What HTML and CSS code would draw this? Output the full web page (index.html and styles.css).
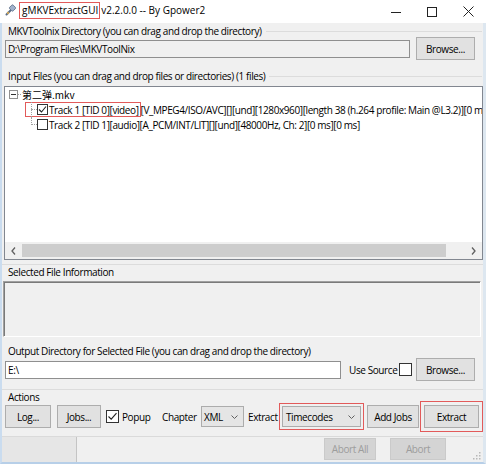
FILE: index.html
```html
<!DOCTYPE html>
<html>
<head>
<meta charset="utf-8">
<title>gMKVExtractGUI</title>
<link rel="stylesheet" href="styles.css">
</head>
<body>
<div class="window">
  <div class="titlebar">
    <svg class="app-icon" viewBox="0 0 12 12" width="12" height="12">
      <path d="M1.5 10.5 L5.5 6.5" stroke="#5b6e88" stroke-width="2" stroke-linecap="round"/>
      <rect x="5" y="1.5" width="5" height="5" rx="1" fill="#9fb2cc" stroke="#5b6e88" stroke-width="0.8" transform="rotate(45 7.5 4)"/>
      <circle cx="3" cy="9" r="1.2" fill="#c8a25a"/>
    </svg>
    <span class="title"><span class="title-hl">gMKVExtractGUI</span><span class="title-rest">v2.2.0.0 -- By Gpower2</span></span>
    <div class="controls">
      <span class="ctl"><svg width="10" height="10" viewBox="0 0 10 10"><line x1="0" y1="5.5" x2="10" y2="5.5" stroke="#222" stroke-width="1"/></svg></span>
      <span class="ctl"><svg width="10" height="10" viewBox="0 0 10 10"><rect x="0.5" y="0.5" width="9" height="9" fill="none" stroke="#222" stroke-width="1"/></svg></span>
      <span class="ctl"><svg width="11" height="11" viewBox="0 0 11 11"><path d="M0.5 0.5 L10.5 10.5 M10.5 0.5 L0.5 10.5" stroke="#222" stroke-width="1"/></svg></span>
    </div>
  </div>

  <div class="client">
    <div class="glabel lined first">MKVToolnix Directory (you can drag and drop the directory)</div>
    <div class="row">
      <div class="textbox readonly tb-mkv">D:\Program Files\MKVToolNix</div>
      <button class="btn browse">Browse...</button>
    </div>

    <div class="glabel lined input-label">Input Files (you can drag and drop files or directories) (1 files)</div>
    <div class="tree">
      <div class="tree-body">
        <div class="node root">
          <span class="expander"></span><span class="hline"></span><span class="root-text">第二弹.mkv</span>
        </div>
        <div class="children">
          <div class="node child">
            <span class="hl-track"><span class="conn"></span><span class="tcb"><svg width="9" height="9" viewBox="0 0 9 9"><polyline points="1,4.5 3.5,7 8,1.5" fill="none" stroke="#222" stroke-width="1.1"/></svg></span><span class="ttext">Track 1 [TID 0][video]</span></span><span class="ttext rest">[V_MPEG4/ISO/AVC][][und][1280x960][length 38 (h.264 profile: Main @L3.2)][0 ms][0 ms]</span>
          </div>
          <div class="node child last">
            <span class="conn"></span><span class="tcb"></span><span class="ttext">Track 2 [TID 1][audio][A_PCM/INT/LIT][][und][48000Hz, Ch: 2][0 ms][0 ms]</span>
          </div>
        </div>
      </div>
      <div class="hscroll">
        <span class="sb-arrow"><svg width="5" height="8" viewBox="0 0 5 8"><polyline points="4,0.5 1,4 4,7.5" fill="none" stroke="#606060" stroke-width="1.3"/></svg></span>
        <span class="sb-track"><span class="sb-thumb"></span></span>
        <span class="sb-arrow"><svg width="5" height="8" viewBox="0 0 5 8"><polyline points="1,0.5 4,4 1,7.5" fill="none" stroke="#606060" stroke-width="1.3"/></svg></span>
      </div>
    </div>

    <div class="sep sep-info"></div>
    <div class="glabel info-label">Selected File Information</div>
    <div class="infobox"></div>

    <div class="glabel out-label">Output Directory for Selected File (you can drag and drop the directory)</div>
    <div class="row">
      <div class="textbox tb-out">E:\</div>
      <span class="lbl use-source">Use Source</span>
      <span class="cb"></span>
      <button class="btn browse2">Browse...</button>
    </div>

    <div class="sep sep-actions"></div>
    <div class="glabel actions-label">Actions</div>
    <div class="row actions-row">
      <button class="btn btn-log">Log...</button>
      <button class="btn btn-jobs">Jobs...</button>
      <span class="cb popup-cb"><svg width="11" height="11" viewBox="0 0 11 11"><polyline points="1.5,5.5 4.2,8.2 9.5,2.2" fill="none" stroke="#222" stroke-width="1.1"/></svg></span>
      <span class="lbl popup-lbl">Popup</span>
      <span class="lbl chapter-lbl">Chapter</span>
      <span class="combo combo-xml"><span class="combo-text">XML</span><svg class="chev" width="7" height="4" viewBox="0 0 7 4"><polyline points="0.5,0.5 3.5,3.5 6.5,0.5" fill="none" stroke="#606060" stroke-width="1"/></svg></span>
      <span class="lbl extract-lbl">Extract</span>
      <span class="combo combo-tc"><span class="combo-text">Timecodes</span><svg class="chev" width="7" height="4" viewBox="0 0 7 4"><polyline points="0.5,0.5 3.5,3.5 6.5,0.5" fill="none" stroke="#606060" stroke-width="1"/></svg></span>
      <button class="btn btn-addjobs">Add Jobs</button>
      <button class="btn btn-extract">Extract</button>
    </div>

    <div class="status">
      <span class="progress"></span>
      <button class="btn disabled btn-abortall">Abort All</button>
      <button class="btn disabled btn-abort">Abort</button>
      <svg class="grip" width="8" height="8" viewBox="0 0 8 8">
        <rect x="6" y="0" width="1.5" height="1.5" fill="#b8b8b8"/>
        <rect x="3" y="3" width="1.5" height="1.5" fill="#b8b8b8"/>
        <rect x="6" y="3" width="1.5" height="1.5" fill="#b8b8b8"/>
        <rect x="0" y="6" width="1.5" height="1.5" fill="#b8b8b8"/>
        <rect x="3" y="6" width="1.5" height="1.5" fill="#b8b8b8"/>
        <rect x="6" y="6" width="1.5" height="1.5" fill="#b8b8b8"/>
      </svg>
    </div>
  </div>
</div>
</body>
</html>
```

FILE: styles.css
```css
* { box-sizing: border-box; }
html, body { margin: 0; padding: 0; }
body {
  width: 486px;
  height: 464px;
  overflow: hidden;
  background: #f0f0f0;
  font-family: "Open Sans", "Noto Sans CJK SC", sans-serif;
  font-size: 10px;
  letter-spacing: -0.4px;
  color: #000;
}
.window {
  width: 486px;
  height: 464px;
  display: flex;
  flex-direction: column;
}

/* title bar */
.titlebar {
  height: 23px;
  flex: none;
  background: #fff;
  display: flex;
  align-items: flex-start;
}
.app-icon { flex: none; margin: 4px 0 0 5px; }
.title {
  margin: 2px 0 0 2px;
  display: flex;
  align-items: center;
  white-space: nowrap;
  letter-spacing: 0;
  font-size: 10px;
}
.title-hl {
  border: 1px solid #e25a5a;
  padding: 0 1px 0 2px;
  line-height: 15px;
}
.title-rest { margin-left: 1px; line-height: 17px; }
.controls { margin-left: auto; display: flex; height: 23px; }
.ctl {
  width: 36px;
  height: 23px;
  display: flex;
  align-items: center;
  justify-content: center;
}

/* client area */
.client {
  flex: 1;
  display: flex;
  flex-direction: column;
  background: #f0f0f0;
  border-left: 2px solid #cadcef;
  border-right: 3px solid #dde7f0;
  border-bottom: 2px solid #b7cfe8;
}
.glabel {
  height: 12px;
  line-height: 12px;
  display: flex;
  align-items: center;
  white-space: nowrap;
  padding-left: 6px;
  flex: none;
}
.glabel.lined::after {
  content: "";
  flex: 1;
  border-top: 1px solid #dcdcdc;
  margin: 1px 1px 0 4px;
}
.glabel.first { margin-top: 2px; }
.input-label { margin-top: 10px; }
.info-label { margin-top: 1px; }
.out-label { margin-top: 8px; }
.actions-label { margin-top: 1px; }

.sep { border-top: 1px solid #dcdcdc; flex: none; }
.sep-info { margin-top: 4px; }
.sep-actions { margin-top: 8px; }

.row {
  display: flex;
  align-items: center;
  height: 23px;
  flex: none;
}
.actions-row { margin-top: 2px; }
.out-label + .row { margin-top: 1px; }

.textbox {
  height: 18px;
  line-height: 16px;
  border: 1px solid #8f8f8f;
  background: #fff;
  padding: 0 2px;
  margin-left: 3px;
  white-space: nowrap;
  overflow: hidden;
}
.textbox.readonly { background: #f0f0f0; }
.tb-mkv { width: 405px; }
.tb-out { width: 336px; }

.btn {
  height: 23px;
  padding: 0;
  background: #e1e1e1;
  border: 1px solid #adadad;
  font: inherit;
  letter-spacing: inherit;
  color: #000;
  flex: none;
}
.browse { width: 59px; margin-left: 6px; }
.browse2 { width: 59px; margin-left: 4px; }
.btn-log { width: 46px; margin-left: 3px; }
.btn-jobs { width: 44px; margin-left: 6px; }
.btn-addjobs { width: 52px; margin-left: 6px; }
.btn-extract {
  width: 55px;
  margin-left: 5px;
  outline: 1px solid #e25a5a;
  outline-offset: 3px;
}

.lbl { white-space: nowrap; flex: none; }
.use-source { width: 50px; margin-left: 8px; }
.popup-lbl { width: 40px; margin-left: 3px; }
.chapter-lbl { width: 39px; }
.extract-lbl { width: 34px; margin-left: 4px; }

.cb {
  width: 13px;
  height: 13px;
  border: 1px solid #333;
  background: #fff;
  flex: none;
  display: flex;
  align-items: center;
  justify-content: center;
}
.popup-cb { margin-left: 5px; }

.combo {
  height: 21px;
  display: flex;
  align-items: center;
  background: #e5e5e5;
  border: 1px solid #acacac;
  padding-left: 2px;
  flex: none;
}
.combo-text { flex: 1; white-space: nowrap; }
.chev { margin-right: 5px; flex: none; }
.combo-xml { width: 43px; }
.combo-tc {
  width: 79px;
  padding-left: 3px;
  outline: 1px solid #e25a5a;
  outline-offset: 2px;
}

/* tree */
.tree {
  margin: 4px 0 0 2px;
  width: 479px;
  height: 174px;
  border: 1px solid #828790;
  background: #fff;
  display: flex;
  flex-direction: column;
  flex: none;
}
.tree-body { flex: 1; overflow: hidden; }
.node {
  height: 15px;
  display: flex;
  align-items: center;
  white-space: nowrap;
}
.root { padding-left: 4px; }
.expander {
  width: 9px;
  height: 9px;
  border: 1px solid #919191;
  background: #fff;
  display: flex;
  align-items: center;
  justify-content: center;
  flex: none;
}
.expander::after {
  content: "";
  width: 5px;
  height: 1px;
  background: #333;
}
.hline {
  width: 3px;
  border-top: 1px dotted #a0a0a0;
  flex: none;
}
.root-text { margin-left: 1px; font-family: "Noto Sans CJK SC", "Open Sans", sans-serif; letter-spacing: 0; }
.children { margin-left: 26px; }
.child { position: relative; }
.child::before {
  content: "";
  position: absolute;
  left: 0;
  top: 0;
  bottom: 0;
  border-left: 1px dotted #a0a0a0;
}
.child.last::before { bottom: 7px; }
.conn {
  width: 6px;
  border-top: 1px dotted #a0a0a0;
  flex: none;
}
.tcb {
  width: 11px;
  height: 11px;
  border: 1px solid #333;
  background: #fff;
  margin-right: 1px;
  display: flex;
  align-items: center;
  justify-content: center;
  flex: none;
}
.hl-track {
  display: flex;
  align-items: center;
  height: 15px;
  border: 1px solid #e25a5a;
  margin-left: -6px;
  padding: 0 1px 0 5px;
  flex: none;
}
.ttext { white-space: nowrap; }

.hscroll {
  height: 17px;
  display: flex;
  background: #f0f0f0;
  flex: none;
}
.sb-arrow {
  width: 17px;
  display: flex;
  align-items: center;
  justify-content: center;
  flex: none;
}
.sb-track { flex: 1; display: flex; align-items: center; }
.sb-thumb { width: 424px; height: 13px; background: #cdcdcd; }

.infobox {
  margin: 3px 0 0 1px;
  width: 478px;
  height: 56px;
  border-style: solid;
  border-width: 1px;
  border-color: #a0a0a0 #ffffff #ffffff #a0a0a0;
  box-shadow: inset 1px 1px 0 #7a7a7a;
  background: #f0f0f0;
  flex: none;
}

/* status bar */
.status {
  margin-top: auto;
  height: 26px;
  border-top: 1px solid #dadada;
  display: flex;
  align-items: flex-start;
  flex: none;
}
.progress {
  width: 75px;
  height: 25px;
  background: #e6e6e6;
  border-right: 1px solid #c4c4c4;
  flex: none;
}
.btn.disabled {
  height: 22px;
  margin-top: 1px;
  background: #d4d4d4;
  border-color: #cacaca;
  color: #9d9d9d;
}
.btn-abortall { width: 52px; margin-left: 247px; }
.btn-abort { width: 56px; margin-left: 14px; }
.grip { margin: auto 2px 2px auto; flex: none; align-self: flex-end; }
```
